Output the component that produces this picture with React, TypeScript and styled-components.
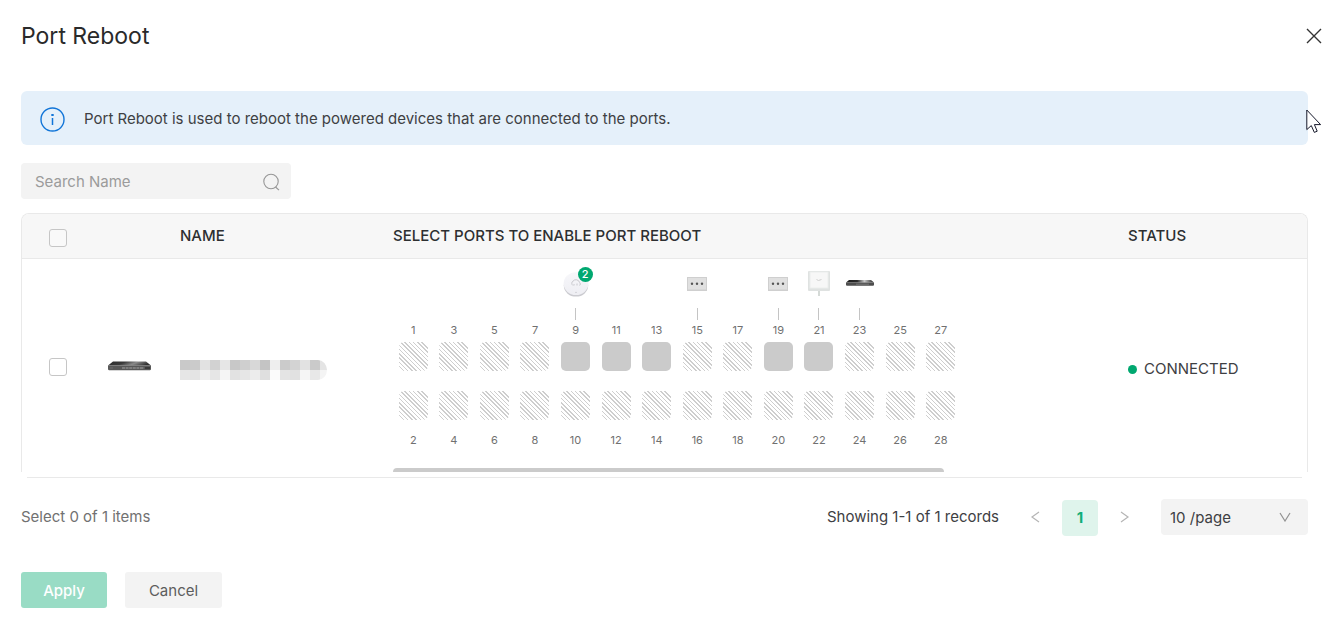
import React from "react";
import styled, { createGlobalStyle } from "styled-components";

const GlobalStyle = createGlobalStyle`
  *, *::before, *::after { box-sizing: border-box; }
  body {
    margin: 0;
    background: #fff;
    color: #3e4043;
    font-family: Inter, "Liberation Sans", sans-serif;
    font-size: 15px;
    line-height: 20px;
  }
  button, input, select { font: inherit; color: inherit; margin: 0; }
`;

const Page = styled.main`
  padding: 16px 0;
`;

const Header = styled.header`
  display: flex;
  align-items: center;
  justify-content: space-between;
  height: 40px;
  padding: 0 11px 0 21px;
`;

const Title = styled.h1`
  margin: 0;
  font-size: 23px;
  line-height: 32px;
  font-weight: 400;
  color: #2a2a2a;
`;

const IconButton = styled.button`
  display: flex;
  align-items: center;
  justify-content: center;
  width: 16px;
  height: 36px;
  padding: 0;
  border: 0;
  background: none;
  cursor: pointer;
`;

const Content = styled.section`
  padding: 0 25px 0 21px;
`;

const Notice = styled.div`
  position: relative;
  display: flex;
  align-items: center;
  gap: 19px;
  height: 54px;
  margin-top: 35px;
  padding: 2px 19px 0;
  border-radius: 6px;
  background: #e5f0fa;
`;

const Pointer = styled.svg`
  position: absolute;
  top: 18px;
  right: -14px;
`;

const Search = styled.label`
  display: flex;
  align-items: center;
  width: 270px;
  height: 36px;
  margin: 18px 0 14px;
  padding: 2px 11px 0 14px;
  border-radius: 4px;
  background: #f3f3f3;
`;

const SearchInput = styled.input`
  flex: 1;
  min-width: 0;
  padding: 0;
  border: 0;
  outline: 0;
  background: none;
  &::placeholder { color: #9b9b9b; opacity: 1; }
`;

const TableFrame = styled.div`
  border: 1px solid #e9e9e9;
  border-bottom: 0;
  border-radius: 8px 8px 0 0;
  overflow: hidden;
`;

const FrameFoot = styled.div`
  height: 6px;
  margin: 0 6px;
  border-bottom: 1px solid #e9e9e9;
`;

const Table = styled.table`
  width: 100%;
  table-layout: fixed;
  border-collapse: separate;
  border-spacing: 0;
`;

const Col = styled.col<{ $w?: number }>`
  width: ${(p) => (p.$w ? `${p.$w}px` : "auto")};
`;

const Th = styled.th`
  height: 45px;
  padding: 0;
  border-bottom: 1px solid #e9e9e9;
  background: #f7f7f7;
  color: #2d2f31;
  font-weight: 500;
  text-align: left;
`;

const Td = styled.td`
  height: 213px;
  padding: 0;
  vertical-align: middle;
`;

const CheckCell = styled.div`
  padding: 3px 0 0 27px;
`;

const Checkbox = styled.input`
  display: block;
  appearance: none;
  width: 18px;
  height: 18px;
  border: 1px solid #c6c6c6;
  border-radius: 3px;
  background: #fff;
  &:checked { background: #00a870; border-color: #00a870; }
`;

const HeadCheckbox = styled(Checkbox)`
  background: #f9f9f9;
`;

const PortArea = styled.div`
  display: flex;
  flex-direction: column;
  justify-content: space-between;
  height: 213px;
`;

const Ports = styled.div`
  display: grid;
  grid-template-columns: repeat(14, 1fr);
  width: 568px;
  padding-top: 9px;
`;

const PortColumn = styled.div`
  display: flex;
  flex-direction: column;
  align-items: center;
`;

const DeviceSlot = styled.div`
  position: relative;
  display: flex;
  align-items: center;
  justify-content: center;
  width: 30px;
  height: 32px;
`;

const Badge = styled.span`
  position: absolute;
  top: -1px;
  right: -2px;
  width: 15px;
  height: 15px;
  border-radius: 50%;
  background: #00a870;
  color: #fff;
  font-size: 11px;
  line-height: 15px;
  font-weight: 500;
  text-align: center;
`;

const Cable = styled.div<{ $on: boolean }>`
  width: 1px;
  height: 12px;
  margin: 8px 0 4px;
  background: ${(p) => (p.$on ? "#c4c4c4" : "transparent")};
`;

const PortLabel = styled.label`
  font-size: 11px;
  line-height: 12px;
  color: #707070;
`;

const PortBox = styled.input<{ $free: boolean }>`
  appearance: none;
  width: 29px;
  height: 29px;
  border-radius: 5px;
  background: ${(p) =>
    p.$free ? "#cbcbcb" : "repeating-linear-gradient(45deg, #cecece 0 1px, #fff 1px 3px)"};
  &:checked { background: #00a870; }
`;

const PortStack = styled.div`
  display: flex;
  flex-direction: column;
  align-items: center;
  gap: 20px;
  margin: 6px 0 14px;
`;

const ScrollThumb = styled.div`
  width: 75%;
  height: 4px;
  border-radius: 4px 4px 0 0;
  background: #cbcbcb;
`;

const Status = styled.span`
  display: flex;
  align-items: center;
  gap: 7px;
  padding-top: 6px;
`;

const Dot = styled.i`
  width: 9px;
  height: 9px;
  margin-top: 1px;
  border-radius: 50%;
  background: #00a870;
`;

const Footer = styled.div`
  display: flex;
  align-items: center;
  justify-content: space-between;
  height: 36px;
  margin-top: 21px;
`;

const Muted = styled.span`
  color: #717171;
`;

const Pager = styled.nav`
  display: flex;
  align-items: center;
`;

const PageButton = styled.button`
  width: 36px;
  height: 36px;
  margin: 1px 19px 0;
  padding: 0;
  border: 0;
  border-radius: 4px;
  background: #dff4ec;
  color: #12ad79;
  font-weight: 700;
`;

const Records = styled.span`
  margin-right: 28px;
`;

const SelectBox = styled.div`
  display: grid;
  align-items: center;
  width: 147px;
  height: 36px;
  margin-left: 28px;
  border-radius: 4px;
  background: #f3f3f3;
  & > * { grid-area: 1 / 1; }
  & > svg { justify-self: end; margin-right: 17px; pointer-events: none; }
`;

const Select = styled.select`
  appearance: none;
  width: 100%;
  height: 36px;
  padding: 1px 36px 0 9px;
  border: 0;
  background: none;
`;

const Actions = styled.div`
  display: flex;
  gap: 18px;
  margin-top: 37px;
`;

const Action = styled.button<{ $primary?: boolean }>`
  height: 36px;
  width: ${(p) => (p.$primary ? "86px" : "97px")};
  padding: 2px 0 0;
  border: 0;
  border-radius: 3px;
  background: ${(p) => (p.$primary ? "#99dcc5" : "#f3f3f3")};
  color: ${(p) => (p.$primary ? "#fff" : "#5d5d5d")};
  font-weight: ${(p) => (p.$primary ? 500 : 400)};
`;

const Chevron = ({ d }: { d: string }) => (
  <svg width="12" height="14" viewBox="0 0 12 14" fill="none" stroke="#b5b5b5" strokeWidth="1.2" aria-hidden="true">
    <path d={d} />
  </svg>
);

const SwitchImage = ({ width, height }: { width: number; height: number }) => (
  <svg width={width} height={height} viewBox="0 0 43 10" preserveAspectRatio="none" aria-hidden="true">
    <defs>
      <linearGradient id="lid" x1="0" x2="1" y1="0" y2="0.2">
        <stop offset="0" stopColor="#2c2c2c" />
        <stop offset="0.4" stopColor="#3a3a3a" />
        <stop offset="0.68" stopColor="#8b8b8b" />
        <stop offset="1" stopColor="#303030" />
      </linearGradient>
    </defs>
    <path d="M5 0.5H38L43 4.5H0Z" fill="url(#lid)" />
    <path d="M0 4.5H43V8.5L42 9.2H1L0 8.5Z" fill="#585858" />
    <path d="M0 4.5H43" stroke="#7c7c7c" strokeWidth=".6" />
    <path d="M14 7H36" stroke="#8a8a8a" strokeWidth="1.4" strokeDasharray="3 .6" />
    <path d="M37 7H42" stroke="#353535" strokeWidth="1.8" />
    <path d="M2 7H5" stroke="#757575" strokeWidth=".8" />
  </svg>
);

const SmallSwitchImage = () => (
  <svg width="28" height="10" viewBox="0 0 28 10" aria-hidden="true">
    <defs>
      <linearGradient id="small-lid" x1="0" x2="1" y1="0" y2="0">
        <stop offset="0" stopColor="#1c1c1c" />
        <stop offset="0.4" stopColor="#2a2a2a" />
        <stop offset="0.66" stopColor="#c9c9c9" />
        <stop offset="0.85" stopColor="#6a6a6a" />
        <stop offset="1" stopColor="#222" />
      </linearGradient>
    </defs>
    <path d="M3 1H25L28 3.5H0Z" fill="url(#small-lid)" />
    <path d="M0 3.5H28V6.2L27 6.8H1L0 6.2Z" fill="#4e4e4e" />
    <path d="M10 5.2H23" stroke="#777" strokeWidth="1" />
  </svg>
);

const AccessPoint = () => (
  <svg width="30" height="30" viewBox="0 0 30 30" aria-hidden="true">
    <defs>
      <linearGradient id="dome" x1="0" y1="0" x2="0" y2="1">
        <stop offset="0" stopColor="#f7f7fa" />
        <stop offset="1" stopColor="#eeeef3" />
      </linearGradient>
    </defs>
    <ellipse cx="15" cy="16.6" rx="12.2" ry="11" fill="#cbcbd0" />
    <ellipse cx="15" cy="14.6" rx="12.4" ry="11.4" fill="url(#dome)" />
    <path d="M12 16.5a2.6 2.6 0 0 1 0-4.4 3.8 3.8 0 0 1 6.6 1.4 2 2 0 0 1 0 3M13 16.5v-1.5M16 16.5v-2" fill="none" stroke="#c8c8cd" strokeWidth="1" />
    <circle cx="15" cy="23.4" r=".6" fill="#c0c0c5" />
  </svg>
);

const WallPlate = () => (
  <svg width="20" height="14" viewBox="0 0 20 14" aria-hidden="true">
    <rect width="20" height="14" fill="#cfcfcf" />
    <rect x="1" y="1" width="18" height="11.5" fill="#e0e0e0" />
    <g fill="#555">
      <circle cx="5" cy="6.8" r="1.2" />
      <circle cx="10" cy="6.8" r="1.2" />
      <circle cx="15" cy="6.8" r="1.2" />
    </g>
  </svg>
);

const Gateway = () => (
  <svg width="22" height="26" viewBox="0 0 22 26" aria-hidden="true">
    <path d="M11 19V25" stroke="#d5dad7" strokeWidth="2" />
    <rect width="22" height="20" rx="1" fill="#dfe2e1" />
    <rect x="2" y="1" width="18" height="16" fill="#f7f7f7" stroke="#eceeed" />
    <path d="M8.5 8.5l2 1 3-1" fill="none" stroke="#cfcfcf" />
  </svg>
);

const MASK = [
  ["c9", "cb", "e2", "d2", "e6", "c8", "cf", "d8", "c4", "ee", "cb", "d3", "e2", "ca", "e4"],
  ["e6", "e4", "f0", "e6", "f5", "e2", "e6", "ec", "df", "fb", "e4", "e1", "f5", "e8", "f4"],
];

const MaskedName = () => (
  <svg width="147" height="20" viewBox="0 0 147 20" role="img" aria-label="Hidden name">
    <clipPath id="mask-end">
      <path d="M0 0H138A9 10 0 0 1 138 20H0Z" />
    </clipPath>
    <g clipPath="url(#mask-end)">
      {MASK.map((row, y) =>
        row.map((v, x) => (
          <rect key={`${x}-${y}`} x={x * 10} y={y * 10} width="10" height="10" fill={`#${v}${v}${v}`} />
        )),
      )}
    </g>
  </svg>
);

const NameCell = styled.div`
  display: flex;
  align-items: center;
  padding-top: 8px;
`;

const DeviceCell = styled.div`
  display: flex;
`;

const DEVICES: Record<number, React.ReactNode> = {
  9: (
    <>
      <AccessPoint />
      <Badge>2</Badge>
    </>
  ),
  15: <WallPlate />,
  19: <WallPlate />,
  21: <Gateway />,
  23: <SmallSwitchImage />,
};

const SELECTABLE = new Set([9, 11, 13, 19, 21]);
const ODD_PORTS = Array.from({ length: 14 }, (_, i) => i * 2 + 1);

const Port = ({ n }: { n: number }) => (
  <PortBox type="checkbox" id={`port-${n}`} $free={SELECTABLE.has(n)} disabled={!SELECTABLE.has(n)} />
);

export default function App() {
  return (
    <Page>
      <GlobalStyle />
      <Header>
        <Title>Port Reboot</Title>
        <IconButton aria-label="Close">
          <svg width="16" height="16" viewBox="0 0 16 16" stroke="#333" strokeWidth="1.4" aria-hidden="true">
            <path d="M1 1L15 15M15 1L1 15" />
          </svg>
        </IconButton>
      </Header>
      <Content>
        <Notice>
          <svg width="25" height="25" viewBox="0 0 25 25" fill="none" stroke="#1175d8" aria-hidden="true">
            <circle cx="12.5" cy="12.5" r="11.5" strokeWidth="1.4" />
            <path d="M12.5 11V18" strokeWidth="1.5" />
            <path d="M12.5 7V9" strokeWidth="2.4" />
          </svg>
          <span>Port Reboot is used to reboot the powered devices that are connected to the ports.</span>
          <Pointer width="16" height="25" viewBox="0 0 16 25" aria-hidden="true">
            <path d="M.8 1V20.6L5.3 16.6L8.3 23.4L11.2 22.2L8.4 15.6H14.6Z" fill="#fff" stroke="#15182a" strokeWidth="1" />
          </Pointer>
        </Notice>
        <Search>
          <SearchInput type="text" placeholder="Search Name" aria-label="Search Name" />
          <svg width="17" height="18" viewBox="0 0 17 18" fill="none" stroke="#969696" strokeWidth="1.1" aria-hidden="true">
            <circle cx="8" cy="8.5" r="7.2" />
            <path d="M12.5 14L16 17.2" />
          </svg>
        </Search>
        <TableFrame>
          <Table>
            <colgroup>
              <Col $w={86} />
              <Col $w={72} />
              <Col $w={213} />
              <Col />
              <Col $w={179} />
            </colgroup>
            <thead>
              <tr>
                <Th>
                  <CheckCell>
                    <HeadCheckbox type="checkbox" aria-label="Select all" />
                  </CheckCell>
                </Th>
                <Th />
                <Th>NAME</Th>
                <Th>SELECT PORTS TO ENABLE PORT REBOOT</Th>
                <Th>STATUS</Th>
              </tr>
            </thead>
            <tbody>
              <tr>
                <Td>
                  <CheckCell>
                    <Checkbox type="checkbox" aria-label="Select device" />
                  </CheckCell>
                </Td>
                <Td>
                  <DeviceCell>
                    <SwitchImage width={43} height={10} />
                  </DeviceCell>
                </Td>
                <Td>
                  <NameCell>
                    <MaskedName />
                  </NameCell>
                </Td>
                <Td>
                  <PortArea>
                    <Ports>
                      {ODD_PORTS.map((n) => (
                        <PortColumn key={n}>
                          <DeviceSlot>{DEVICES[n]}</DeviceSlot>
                          <Cable $on={n in DEVICES} />
                          <PortLabel htmlFor={`port-${n}`}>{n}</PortLabel>
                          <PortStack>
                            <Port n={n} />
                            <Port n={n + 1} />
                          </PortStack>
                          <PortLabel htmlFor={`port-${n + 1}`}>{n + 1}</PortLabel>
                        </PortColumn>
                      ))}
                    </Ports>
                    <ScrollThumb />
                  </PortArea>
                </Td>
                <Td>
                  <Status>
                    <Dot />
                    CONNECTED
                  </Status>
                </Td>
              </tr>
            </tbody>
          </Table>
        </TableFrame>
        <FrameFoot />
        <Footer>
          <Muted>Select 0 of 1 items</Muted>
          <Pager aria-label="Pagination">
            <Records>Showing 1-1 of 1 records</Records>
            <IconButton aria-label="Previous page">
              <Chevron d="M10 2L3 7L10 12" />
            </IconButton>
            <PageButton aria-current="page">1</PageButton>
            <IconButton aria-label="Next page">
              <Chevron d="M2 2L9 7L2 12" />
            </IconButton>
            <SelectBox>
              <Select aria-label="Rows per page" defaultValue="10">
                <option value="10">10 /page</option>
                <option value="20">20 /page</option>
              </Select>
              <svg width="12" height="10" viewBox="0 0 12 10" fill="none" stroke="#929292" strokeWidth="1.2" aria-hidden="true">
                <path d="M1 1L6 9L11 1" />
              </svg>
            </SelectBox>
          </Pager>
        </Footer>
        <Actions>
          <Action $primary>Apply</Action>
          <Action>Cancel</Action>
        </Actions>
      </Content>
    </Page>
  );
}
